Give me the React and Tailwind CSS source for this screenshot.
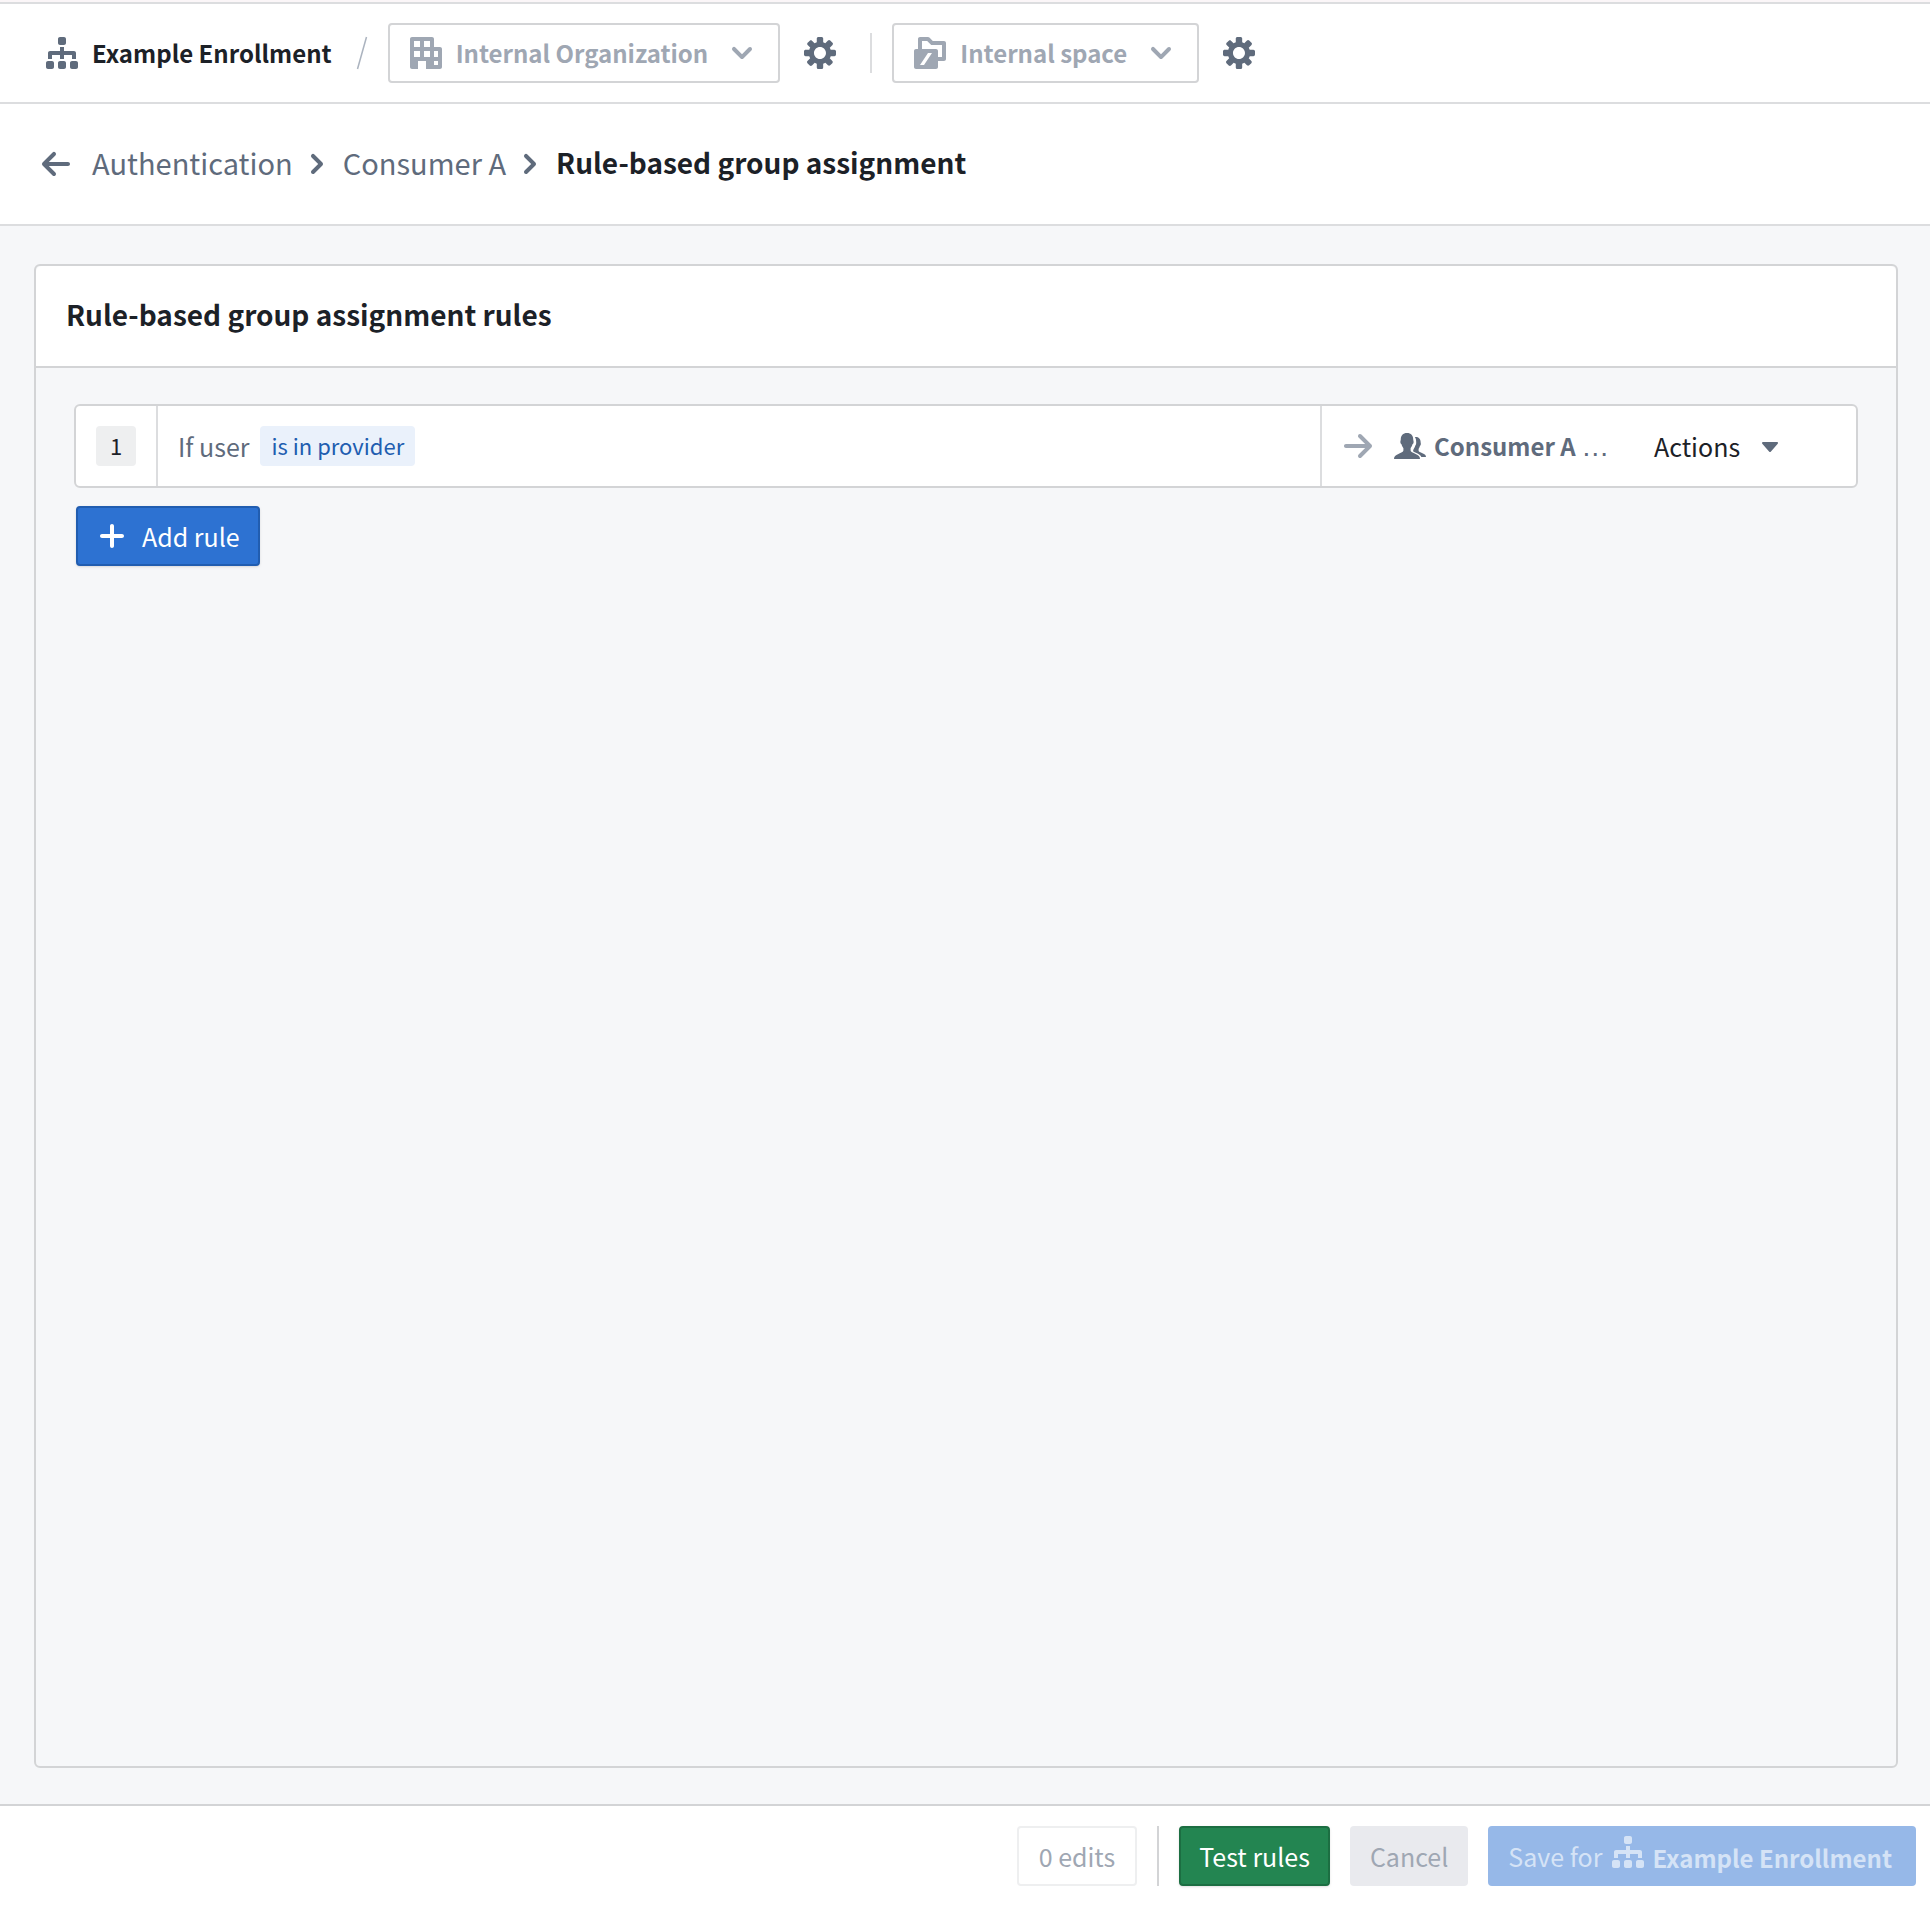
import React from 'react';

const paths = {
  tree: 'M15 8v3h-2V9H9v2H7V9H3v2H1V8c0-.55.45-1 1-1h5V5h2v2h5c.55 0 1 .45 1 1zM1 12h2c.55 0 1 .45 1 1v2c0 .55-.45 1-1 1H1c-.55 0-1-.45-1-1v-2c0-.55.45-1 1-1zm6 0h2c.55 0 1 .45 1 1v2c0 .55-.45 1-1 1H7c-.55 0-1-.45-1-1v-2c0-.55.45-1 1-1zm6 0h2c.55 0 1 .45 1 1v2c0 .55-.45 1-1 1h-2c-.55 0-1-.45-1-1v-2c0-.55.45-1 1-1zM7 0h2c.55 0 1 .45 1 1v2c0 .55-.45 1-1 1H7c-.55 0-1-.45-1-1V1c0-.55.45-1 1-1z',
  cog: 'M15.19 6.39h-1.85c-.11-.37-.27-.71-.45-1.04l1.36-1.36c.31-.31.31-.82 0-1.13l-1.13-1.13a.803.803 0 00-1.13 0l-1.36 1.36c-.33-.17-.67-.33-1.04-.44V.79c0-.44-.36-.8-.8-.8h-1.6c-.44 0-.8.36-.8.8v1.86c-.39.12-.75.28-1.1.47l-1.3-1.3c-.3-.3-.79-.3-1.09 0L1.82 2.91c-.3.3-.3.79 0 1.09l1.3 1.3c-.2.34-.36.7-.48 1.09H.79c-.44 0-.8.36-.8.8v1.6c0 .44.36.8.8.8h1.85c.11.37.27.71.45 1.04l-1.36 1.36c-.31.31-.31.82 0 1.13l1.13 1.13c.31.31.82.31 1.13 0l1.36-1.36c.33.18.67.33 1.04.44v1.86c0 .44.36.8.8.8h1.6c.44 0 .8-.36.8-.8v-1.86c.39-.12.75-.28 1.1-.47l1.3 1.3c.3.3.79.3 1.09 0l1.09-1.09c.3-.3.3-.79 0-1.09l-1.3-1.3c.19-.35.36-.71.48-1.1h1.85c.44 0 .8-.36.8-.8v-1.6a.816.816 0 00-.81-.79zm-7.2 4.6c-1.66 0-3-1.34-3-3s1.34-3 3-3 3 1.34 3 3-1.34 3-3 3z',
  arrowLeft: 'M13.99 6.99H4.41L7.7 3.7a1.003 1.003 0 00-1.42-1.42l-5 5a1.014 1.014 0 000 1.42l5 5a1.003 1.003 0 001.42-1.42L4.41 8.99H14c.55 0 1-.45 1-1s-.46-1-1.01-1z',
  arrowRight: 'M14.7 7.29l-5-5a.965.965 0 00-.71-.3 1.003 1.003 0 00-.71 1.71l3.29 3.29H1.99c-.55 0-1 .45-1 1s.45 1 1 1h9.59l-3.29 3.29a1.003 1.003 0 001.42 1.42l5-5c.18-.18.29-.43.29-.71s-.12-.52-.3-.7z',
  chevronRight: 'M10.71 7.29l-4-4a1.003 1.003 0 00-1.42 1.42L8.59 8 5.3 11.29c-.19.18-.3.43-.3.71a1.003 1.003 0 001.71.71l4-4c.18-.18.29-.43.29-.71 0-.28-.11-.53-.29-.71z',
  chevronDown: 'M12 5c-.28 0-.53.11-.71.29L8 8.59l-3.29-3.3a1.003 1.003 0 00-1.42 1.42l4 4c.18.18.43.29.71.29s.53-.11.71-.29l4-4A1.003 1.003 0 0012 5z',
  caretDown: 'M12 6.5c0-.28-.22-.5-.5-.5h-7a.495.495 0 00-.37.83l3.5 4c.09.1.22.17.37.17s.28-.07.37-.17l3.5-4c.08-.09.13-.2.13-.33z',
  plus: 'M13 7H9V3c0-.55-.45-1-1-1s-1 .45-1 1v4H3c-.55 0-1 .45-1 1s.45 1 1 1h4v4c0 .55.45 1 1 1s1-.45 1-1V9h4c.55 0 1-.45 1-1s-.45-1-1-1z',
  office: 'M11 0c.55 0 1 .45 1 1v4h3c.55 0 1 .45 1 1v9c0 .55-.45 1-1 1H8v-4H4v4H1c-.55 0-1-.45-1-1V1c0-.55.45-1 1-1h10zM2 2v3h3V2H2zm5 0v3h3V2H7zM2 7v3h3V7H2zm5 0v3h3V7H7zm5 0v3h2V7h-2zm0 5v2h2v-2h-2z',
  space: 'M11 6c.55 0 1 .45 1 1v8c0 .55-.45 1-1 1H1c-.55 0-1-.45-1-1V7c0-.55.45-1 1-1h10zM7 8l-4 6h2l4-6H7zM3 0h4c.28 0 .53.11.71.29L9.41 2H15c.55 0 1 .45 1 1v8c0 .55-.45 1-1 1h-3v-2h2V4H8.6l-2-2H4v4H2V1c0-.55.45-1 1-1z',
  people: 'M6.5 1.5c2 0 3.1 1.3 3.1 3.1 0 .6.3.9.2 1.6-.1.6-.4.6-.6 1.1-.2.9-.7 1.4-.9 1.8v1.2c0 .8 1.2 1.1 2.5 1.7 1.5.6 2.2 1.1 2.2 2.5H0c0-1.4.7-1.9 2.2-2.5 1.3-.6 2.5-.9 2.5-1.7V9.1c-.2-.4-.7-.9-.9-1.8-.2-.5-.5-.5-.6-1.1-.1-.7.2-1 .2-1.6 0-1.8 1.1-3.1 3.1-3.1zM10.4 3.5c1.8-.2 2.9.9 2.9 2.4 0 .5.2.7.1 1.3-.1.5-.3.5-.5.9-.1.7-.5 1-.6 1.4v.9c0 .6.9.8 1.9 1.2 1.2.4 1.8.9 1.8 1.9h-2.3c-.4-1-1.3-1.5-2.5-2l-1.4-.6c-.3-.3-.3-.8 0-1.3.4-.6.6-1 .8-1.7.4-.5.5-1 .5-1.8 0-1-.2-1.9-.7-2.6z',
};

function Icon({ name, className = '' }) {
  return (
    <svg viewBox="0 0 16 16" fill="currentColor" fillRule="evenodd" aria-hidden="true" className={`size-8 shrink-0 ${className}`}>
      <path d={paths[name]} />
    </svg>
  );
}

function Picker({ icon, label }) {
  return (
    <button type="button" className="flex h-15 items-center rounded-sm border-2 border-[#d3d4d6] px-5 text-2xl font-bold text-[#9fa7b3]">
      <Icon name={icon} />
      <span className="ml-3.5">{label}</span>
      <Icon name="chevronDown" className="ml-[18px]" />
    </button>
  );
}

function SettingsButton({ label }) {
  return (
    <button type="button" aria-label={label} className="ml-6 text-[#5f6b7c]">
      <Icon name="cog" />
    </button>
  );
}

function App() {
  return (
    <div className="flex min-h-screen flex-col bg-[#f6f7f9] font-['Noto_Sans_CJK_SC',sans-serif] text-[25px] leading-9 text-[#1c2127]">
      {/* Top bar */}
      <div className="h-0.5 bg-[#fbf6f8]" />
      <header className="flex h-[102px] items-center border-y-2 border-[#dcdddf] bg-white pl-[46px]">
        <Icon name="tree" className="text-[#5f6b7c]" />
        <span className="ml-3.5 text-2xl font-bold">Example Enrollment</span>
        <svg viewBox="0 0 12 34" aria-hidden="true" className="mr-5 ml-6 h-[34px] w-3 text-[#abb3bf]">
          <path d="M1.5 33 10.5 1" stroke="currentColor" strokeWidth="1.5" />
        </svg>
        <Picker icon="office" label="Internal Organization" />
        <SettingsButton label="Organization settings" />
        <div className="mr-5 ml-[34px] h-10 w-0.5 bg-[#dcdddf]" />
        <Picker icon="space" label="Internal space" />
        <SettingsButton label="Space settings" />
      </header>

      {/* Breadcrumbs */}
      <nav className="flex h-[122px] items-center border-b-2 border-[#dcdddf] bg-white pl-10 text-[29px] text-[#5f6b7c]">
        <button type="button" aria-label="Back">
          <Icon name="arrowLeft" />
        </button>
        <a href="#authentication" className="ml-5 pb-1">Authentication</a>
        <Icon name="chevronRight" className="mr-2.5 ml-2" />
        <a href="#consumer-a" className="pb-1">Consumer A</a>
        <Icon name="chevronRight" className="mr-2.5 ml-2" />
        <h1 className="pb-1 text-[28px] font-bold text-[#1c2127]">Rule-based group assignment</h1>
      </nav>

      <main className="flex grow flex-col pt-[38px] pr-8 pb-9 pl-[34px]">
        <section className="flex grow flex-col rounded-md border-2 border-[#d3d4d6]">
          <h2 className="flex h-[102px] items-center rounded-t-md border-b-2 border-[#d3d4d6] bg-white px-[30px] pb-1 text-[28px] font-bold">
            Rule-based group assignment rules
          </h2>
          <div className="px-[38px] py-9">
            <div className="flex h-[84px] rounded-md border-2 border-[#d3d4d6] bg-white">
              <div className="flex w-[82px] items-center justify-center border-r-2 border-[#dcdddf]">
                <span className="flex size-10 items-center justify-center rounded-sm bg-[#eeeff0] pb-0.5 text-[22px]">1</span>
              </div>
              <div className="flex grow items-center gap-[11px] pl-5 text-[#5f6b7c]">
                <span>If user</span>
                <span className="flex h-10 items-center rounded-sm bg-[#eaf1fb] px-[11px] pb-0.5 text-[22px] text-[#215db0]">is in provider</span>
              </div>
              <div className="flex w-[536px] items-center border-l-2 border-[#dcdddf] pl-5">
                <Icon name="arrowRight" className="text-[#9fa7b3]" />
                <Icon name="people" className="ml-5 text-[#5f6b7c]" />
                <span className="ml-2 w-[180px] text-2xl leading-9 font-bold whitespace-nowrap text-[#5f6b7c]">
                  Consumer A <span className="font-['Liberation_Sans',sans-serif] text-[28px] leading-none font-normal">…</span>
                </span>
                <button type="button" className="ml-10 flex items-center gap-3.5">
                  Actions
                  <Icon name="caretDown" className="text-[#5f6b7c]" />
                </button>
              </div>
            </div>
            <button type="button" className="mt-[18px] ml-0.5 flex h-15 items-center gap-3.5 rounded-sm border-2 border-[#215db0] bg-[#2d72d2] px-[18px] text-white shadow-sm">
              <Icon name="plus" />
              Add rule
            </button>
          </div>
        </section>
      </main>

      {/* Action bar */}
      <footer className="flex h-[102px] items-center justify-end gap-5 border-t-2 border-[#d3d4d6] bg-white pr-3.5">
        <button type="button" disabled className="h-15 rounded-sm border-2 border-[#eeeff0] px-5 text-[#9fa7b3]">0 edits</button>
        <div className="h-15 w-0.5 bg-[#d3d4d6]" />
        <button type="button" className="h-15 rounded-sm border-2 border-[#1c6e42] bg-[#238551] px-[18px] text-white shadow-sm">Test rules</button>
        <button type="button" disabled className="h-15 rounded-sm bg-[#e9eaee] px-5 text-[#9fa7b3]">Cancel</button>
        <button type="button" disabled className="flex h-15 items-center rounded-sm bg-[#96b8e8] pr-6 pl-5 text-[#d5e3f6]">
          Save for
          <Icon name="tree" className="mb-2 ml-2.5" />
          <span className="ml-2 pt-1 text-2xl leading-9 font-bold">Example Enrollment</span>
        </button>
      </footer>
    </div>
  );
}

export default App;
